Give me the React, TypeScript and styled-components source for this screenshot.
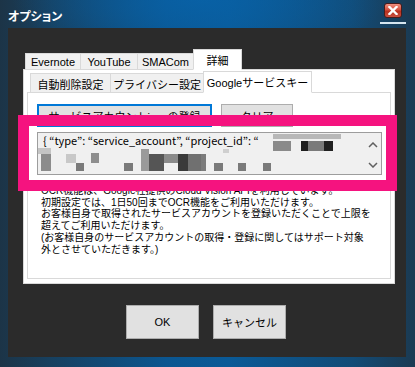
import React from "react";
import styled, { createGlobalStyle } from "styled-components";

const Global = createGlobalStyle`
  html, body { margin: 0; padding: 0; background: #1b3a53; }
  body { font-family: "Liberation Sans", "Noto Sans CJK JP", sans-serif; }
  * { box-sizing: border-box; }
`;

const Window = styled.div`
  position: relative;
  width: 415px;
  height: 367px;
  display: flex;
  flex-direction: column;
  overflow: hidden;
  background:
    radial-gradient(ellipse 45% 60px at 48% 0, rgba(8, 98, 168, 0.85), rgba(8, 98, 168, 0) 100%),
    linear-gradient(90deg, #1c3447 0%, #17405f 12%, #0b5690 40%, #0a5a97 55%, #124b76 85%, #1b3a52 100%);
`;

const TitleBar = styled.div`
  height: 28px;
  display: flex;
  justify-content: space-between;
  align-items: flex-start;
  padding: 0 9px 0 8px;
`;

const Title = styled.div`
  margin-top: 8px;
  color: #fff;
  font-family: "Noto Sans CJK JP", sans-serif;
  font-weight: bold;
  font-size: 12px;
  line-height: 15px;
  font-feature-settings: "palt";
`;

const CloseWrap = styled.div`
  width: 26px;
  margin-top: 3px;
  display: flex;
  flex-direction: column;
  align-items: center;
  gap: 4px;
`;

const CloseButton = styled.div`
  width: 18px;
  height: 15px;
  border-radius: 3px;
  border: 1px solid #4a1c1c;
  background: linear-gradient(#f09080 0%, #d4503e 45%, #b8301f 55%, #c85040 100%);
  display: flex;
  align-items: center;
  justify-content: center;
`;

const CloseUnderline = styled.div`
  width: 26px;
  height: 2px;
  background: #d6e6f0;
`;

const Client = styled.div`
  margin: 0 9px 0 8px;
  height: 329px;
  background: #2b2b2b;
  padding: 21px 11px 0 15px;
  display: flex;
  flex-direction: column;
`;

const TabStrip = styled.div<{ $h: number; $pl: number }>`
  height: ${(p) => p.$h}px;
  display: flex;
  align-items: flex-end;
  padding-left: ${(p) => p.$pl}px;
  margin-bottom: -1px;
  position: relative;
  z-index: 1;
`;

const Tab = styled.div<{ $w: number; $h: number; $active?: boolean }>`
  width: ${(p) => p.$w}px;
  height: ${(p) => p.$h}px;
  margin-left: -1px;
  &:first-child { margin-left: 0; }
  background: ${(p) => (p.$active ? "#ffffff" : "#f0f0f0")};
  border: 1px solid #d9d9d9;
  border-bottom-color: ${(p) => (p.$active ? "#ffffff" : "#d9d9d9")};
  position: relative;
  z-index: ${(p) => (p.$active ? 2 : 1)};
  display: flex;
  align-items: center;
  justify-content: center;
  font-size: 11px;
  color: #000;
  white-space: nowrap;
  padding-top: ${(p) => (p.$active ? 0 : 1)}px;
`;

const OuterPanel = styled.div`
  height: 215px;
  width: 372px;
  background: #fff;
  border: 1px solid #d9d9d9;
  padding: 1px 3px 4px 3px;
  display: flex;
  flex-direction: column;
`;

const InnerPanel = styled.div`
  flex: 1;
  background: #fff;
  border: 1px solid #d9d9d9;
  padding: 11px 8px 0 9px;
  display: flex;
  flex-direction: column;
`;

const ButtonRow = styled.div`
  display: flex;
  gap: 9px;
`;

const WinButton = styled.div<{ $w: number; $h: number; $default?: boolean }>`
  width: ${(p) => p.$w}px;
  height: ${(p) => p.$h}px;
  background: #e1e1e1;
  border: ${(p) => (p.$default ? "2px solid #0078d7" : "1px solid #adadad")};
  display: flex;
  align-items: center;
  justify-content: center;
  font-size: 11px;
  color: #000;
  white-space: nowrap;
`;

const TextBox = styled.div`
  position: relative;
  margin-top: 5px;
  width: 345px;
  height: 43px;
  background: #f0f0f0;
  border: 1px solid #9d9d9d;
  display: flex;
`;

const TextBody = styled.div`
  flex: 1;
  padding: 1px 0 0 5px;
  font-family: "Noto Sans CJK JP", sans-serif;
  font-size: 11px;
  line-height: 13px;
  color: #000;
  white-space: nowrap;
  overflow: hidden;
`;

const ScrollCol = styled.div`
  width: 17px;
  display: flex;
  flex-direction: column;
  align-items: center;
  justify-content: space-between;
  padding: 9px 0 6px;
`;

const Mosaic = styled.svg`
  position: absolute;
  left: 0;
  top: 0;
`;

const Desc = styled.div`
  margin-top: 10px;
  padding-left: 4px;
  font-size: 10px;
  line-height: 11.7px;
  color: #000;
  white-space: nowrap;
`;

const DialogButtons = styled.div`
  margin-top: 21px;
  padding-left: 103px;
  display: flex;
  gap: 14px;
`;

const BottomBand = styled.div`
  flex: 1;
`;

const Highlight = styled.div`
  position: absolute;
  left: 18px;
  top: 115px;
  width: 379px;
  height: 76px;
  border: 11px solid #f5137f;
  pointer-events: none;
`;

const Chevron = ({ up }: { up?: boolean }) => (
  <svg width="10" height="6" viewBox="0 0 10 6">
    <path
      d={up ? "M1 5 L5 1 L9 5" : "M1 1 L5 5 L9 1"}
      fill="none"
      stroke="#606060"
      strokeWidth="1.5"
    />
  </svg>
);

const blocks: [number, number, number, number, string][] = [
  [235, 1, 68, 5, "#b8b8b8"],
  [235, 8, 18, 10, "#8a8a8a"],
  [263, 8, 7, 10, "#1e1e1e"],
  [270, 8, 16, 10, "#7a7a7a"],
  [286, 8, 9, 10, "#202020"],
  [185, 16, 6, 4, "#cfcfcf"],
  [0, 15, 13, 6, "#c4c4c4"],
  [3, 21, 10, 17, "#8c8c8c"],
  [28, 21, 10, 9, "#c8c8c8"],
  [38, 30, 8, 8, "#7a7a7a"],
  [53, 20, 8, 10, "#8e8e8e"],
  [86, 30, 9, 8, "#7a7a7a"],
  [103, 16, 8, 22, "#9a9a9a"],
  [111, 21, 15, 17, "#555555"],
  [126, 21, 14, 9, "#8a8a8a"],
  [140, 21, 10, 17, "#3a3a3a"],
  [150, 21, 13, 17, "#707070"],
  [163, 21, 5, 17, "#7c7c7c"],
  [176, 30, 9, 8, "#7a7a7a"],
  [200, 30, 8, 8, "#7a7a7a"],
  [225, 30, 8, 8, "#7a7a7a"],
];

export default function App() {
  return (
    <>
      <Global />
      <Window>
        <TitleBar>
          <Title>オプション</Title>
          <CloseWrap>
            <CloseButton>
              <svg width="10" height="9" viewBox="0 0 10 9">
                <path d="M1.5 1 L8.5 8 M8.5 1 L1.5 8" stroke="#fff" strokeWidth="2.4" strokeLinecap="square" />
              </svg>
            </CloseButton>
            <CloseUnderline />
          </CloseWrap>
        </TitleBar>
        <Client>
          <TabStrip $h={21} $pl={2}>
            <Tab $w={56} $h={17}>Evernote</Tab>
            <Tab $w={58} $h={17}>YouTube</Tab>
            <Tab $w={57} $h={17}>SMACom</Tab>
            <Tab $w={49} $h={21} $active>詳細</Tab>
          </TabStrip>
          <OuterPanel>
            <TabStrip $h={22} $pl={3}>
              <Tab $w={81} $h={20}>自動削除設定</Tab>
              <Tab $w={94} $h={20}>プライバシー設定</Tab>
              <Tab $w={109} $h={22} $active>Googleサービスキー</Tab>
            </TabStrip>
            <InnerPanel>
              <ButtonRow>
                <WinButton $w={175} $h={23} $default>サービスアカウントjsonの登録</WinButton>
                <WinButton $w={72} $h={23}>クリア</WinButton>
              </ButtonRow>
              <TextBox>
                <TextBody>{"{ “type”: “service_account”, “project_id”: “"}</TextBody>
                <ScrollCol>
                  <Chevron up />
                  <Chevron />
                </ScrollCol>
                <Mosaic width="330" height="41" viewBox="0 0 330 41">
                  {blocks.map(([x, y, w, h, c], i) => (
                    <rect key={i} x={x} y={y} width={w} height={h} fill={c} />
                  ))}
                </Mosaic>
              </TextBox>
              <Desc>
                OCR機能は、Google社提供のCloud Vision APIを利用しています。
                <br />
                初期設定では、1日50回までOCR機能をご利用いただけます。
                <br />
                お客様自身で取得されたサービスアカウントを登録いただくことで上限を
                <br />
                超えてご利用いただけます。
                <br />
                (お客様自身のサービスアカウントの取得・登録に関してはサポート対象
                <br />
                外とさせていただきます。)
              </Desc>
            </InnerPanel>
          </OuterPanel>
          <DialogButtons>
            <WinButton $w={73} $h={34}>OK</WinButton>
            <WinButton $w={73} $h={34}>キャンセル</WinButton>
          </DialogButtons>
        </Client>
        <BottomBand />
        <Highlight />
      </Window>
    </>
  );
}
